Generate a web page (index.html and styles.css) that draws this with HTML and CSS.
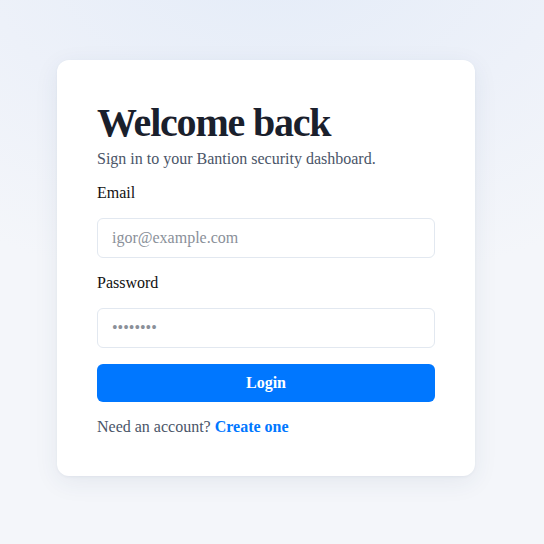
FILE: index.html
```html
<!DOCTYPE html>
<html lang="en">
<head>
<meta charset="utf-8">
<title>Login</title>
<link rel="stylesheet" href="styles.css">
</head>
<body>
<main class="page">
  <section class="card">
    <h1 class="title">Welcome back</h1>
    <p class="subtitle">Sign in to your Bantion security dashboard.</p>
    <form class="form">
      <label class="label" for="email">Email</label>
      <input class="input" id="email" type="email" placeholder="igor@example.com">
      <label class="label" for="password">Password</label>
      <input class="input" id="password" type="password" placeholder="••••••••">
      <button class="button" type="button">Login</button>
    </form>
    <p class="footer">Need an account? <a class="link" href="#">Create one</a></p>
  </section>
</main>
</body>
</html>
```
FILE: styles.css
```css
html, body {
  margin: 0;
  padding: 0;
}
body {
  font-family: "Liberation Serif", "Times New Roman", serif;
  background: radial-gradient(ellipse 120% 80% at 50% -10%, #e4ecf8 0%, #edf1f9 45%, #f4f6fa 80%);
  min-height: 544px;
  color: #111;
}
.page {
  padding: 60px 0 0 57px;
}
.card {
  box-sizing: border-box;
  width: 418px;
  background: #fff;
  border-radius: 12px;
  padding: 40px;
  box-shadow: 0 6px 24px rgba(40, 60, 100, 0.08), 0 1px 3px rgba(40, 60, 100, 0.05);
}
.title {
  margin: 0;
  font-size: 40px;
  line-height: 46px;
  font-weight: bold;
  letter-spacing: -0.03em;
  color: #1a202c;
}
.subtitle {
  margin: 4px 0 16px;
  font-size: 16px;
  line-height: 18px;
  color: #4a5568;
}
.form {
  display: flex;
  flex-direction: column;
}
.label {
  font-size: 16px;
  line-height: 18px;
  color: #111;
  margin-bottom: 16px;
}
.input {
  box-sizing: border-box;
  height: 40px;
  width: 100%;
  border: 1px solid #e2e8f0;
  border-radius: 6px;
  padding: 0 14px;
  font-family: "Liberation Serif", "Times New Roman", serif;
  font-size: 16px;
  color: #1a202c;
  background: #fff;
  margin-bottom: 16px;
  outline: none;
}
.input::placeholder {
  color: #8a9099;
}
.button {
  box-sizing: border-box;
  height: 38px;
  width: 100%;
  border: none;
  border-radius: 6px;
  background: #0077ff;
  color: #fff;
  font-family: "Liberation Serif", "Times New Roman", serif;
  font-size: 16px;
  font-weight: bold;
  cursor: pointer;
}
.footer {
  margin: 16px 0 0;
  font-size: 16px;
  line-height: 18px;
  color: #4a5568;
}
.link {
  color: #0077ff;
  font-weight: bold;
  text-decoration: none;
}
```
